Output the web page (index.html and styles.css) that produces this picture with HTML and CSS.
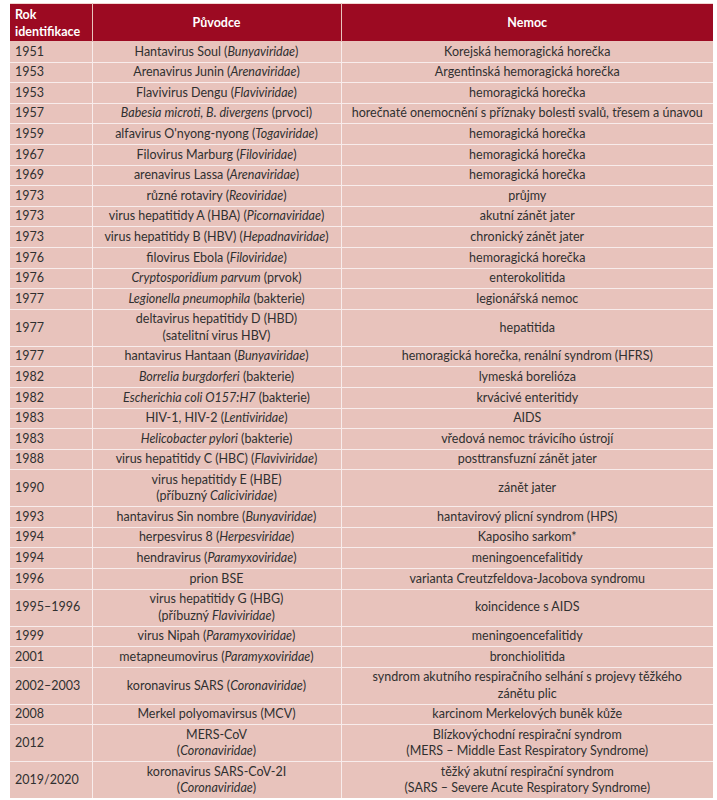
FILE: index.html
```html
<!DOCTYPE html>
<html lang="cs">
<head>
<meta charset="utf-8">
<title>Tabulka</title>
<link rel="stylesheet" href="styles.css">
</head>
<body>
<table class="tbl">
  <colgroup>
    <col class="c1"><col class="c2"><col class="c3">
  </colgroup>
  <thead>
    <tr><th class="year">Rok<br>identifikace</th><th>Původce</th><th>Nemoc</th></tr>
  </thead>
  <tbody>
    <tr><td>1951</td><td>Hantavirus Soul (<i>Bunyaviridae</i>)</td><td>Korejská hemoragická horečka</td></tr>
    <tr><td>1953</td><td>Arenavirus Junin (<i>Arenaviridae</i>)</td><td>Argentinská hemoragická horečka</td></tr>
    <tr><td>1953</td><td>Flavivirus Dengu (<i>Flaviviridae</i>)</td><td>hemoragická horečka</td></tr>
    <tr><td>1957</td><td><i>Babesia microti, B. divergens</i> (prvoci)</td><td>horečnaté onemocnění s příznaky bolesti svalů, třesem a únavou</td></tr>
    <tr><td>1959</td><td>alfavirus O'nyong-nyong (<i>Togaviridae</i>)</td><td>hemoragická horečka</td></tr>
    <tr><td>1967</td><td>Filovirus Marburg (<i>Filoviridae</i>)</td><td>hemoragická horečka</td></tr>
    <tr><td>1969</td><td>arenavirus Lassa (<i>Arenaviridae</i>)</td><td>hemoragická horečka</td></tr>
    <tr><td>1973</td><td>různé rotaviry (<i>Reoviridae</i>)</td><td>průjmy</td></tr>
    <tr><td>1973</td><td>virus hepatitidy A (HBA) (<i>Picornaviridae</i>)</td><td>akutní zánět jater</td></tr>
    <tr><td>1973</td><td>virus hepatitidy B (HBV) (<i>Hepadnaviridae</i>)</td><td>chronický zánět jater</td></tr>
    <tr><td>1976</td><td>filovirus Ebola (<i>Filoviridae</i>)</td><td>hemoragická horečka</td></tr>
    <tr><td>1976</td><td><i>Cryptosporidium parvum</i> (prvok)</td><td>enterokolitida</td></tr>
    <tr><td>1977</td><td><i>Legionella pneumophila</i> (bakterie)</td><td>legionářská nemoc</td></tr>
    <tr><td>1977</td><td>deltavirus hepatitidy D (HBD)<br>(satelitní virus HBV)</td><td>hepatitida</td></tr>
    <tr><td>1977</td><td>hantavirus Hantaan (<i>Bunyaviridae</i>)</td><td>hemoragická horečka, renální syndrom (HFRS)</td></tr>
    <tr><td>1982</td><td><i>Borrelia burgdorferi</i> (bakterie)</td><td>lymeská borelióza</td></tr>
    <tr><td>1982</td><td><i>Escherichia coli O157:H7</i> (bakterie)</td><td>krvácivé enteritidy</td></tr>
    <tr><td>1983</td><td>HIV-1, HIV-2 (<i>Lentiviridae</i>)</td><td>AIDS</td></tr>
    <tr><td>1983</td><td><i>Helicobacter pylori</i> (bakterie)</td><td>vředová nemoc trávicího ústrojí</td></tr>
    <tr><td>1988</td><td>virus hepatitidy C (HBC) (<i>Flaviviridae</i>)</td><td>posttransfuzní zánět jater</td></tr>
    <tr><td>1990</td><td>virus hepatitidy E (HBE)<br>(příbuzný <i>Caliciviridae</i>)</td><td>zánět jater</td></tr>
    <tr><td>1993</td><td>hantavirus Sin nombre (<i>Bunyaviridae</i>)</td><td>hantavirový plicní syndrom (HPS)</td></tr>
    <tr><td>1994</td><td>herpesvirus 8 (<i>Herpesviridae</i>)</td><td>Kaposiho sarkom*</td></tr>
    <tr><td>1994</td><td>hendravirus (<i>Paramyxoviridae</i>)</td><td>meningoencefalitidy</td></tr>
    <tr><td>1996</td><td>prion BSE</td><td>varianta Creutzfeldova-Jacobova syndromu</td></tr>
    <tr><td>1995–1996</td><td>virus hepatitidy G (HBG)<br>(příbuzný <i>Flaviviridae</i>)</td><td>koincidence s AIDS</td></tr>
    <tr><td>1999</td><td>virus Nipah (<i>Paramyxoviridae</i>)</td><td>meningoencefalitidy</td></tr>
    <tr><td>2001</td><td>metapneumovirus (<i>Paramyxoviridae</i>)</td><td>bronchiolitida</td></tr>
    <tr><td>2002–2003</td><td>koronavirus SARS (<i>Coronaviridae</i>)</td><td>syndrom akutního respiračního selhání s projevy těžkého<br>zánětu plic</td></tr>
    <tr><td>2008</td><td>Merkel polyomavirsus (MCV)</td><td>karcinom Merkelových buněk kůže</td></tr>
    <tr><td>2012</td><td>MERS-CoV<br>(<i>Coronaviridae</i>)</td><td>Blízkovýchodní respirační syndrom<br>(MERS – Middle East Respiratory Syndrome)</td></tr>
    <tr><td>2019/2020</td><td>koronavirus SARS-CoV-2I<br>(<i>Coronaviridae</i>)</td><td>těžký akutní respirační syndrom<br>(SARS – Severe Acute Respiratory Syndrome)</td></tr>
  </tbody>
</table>
</body>
</html>
```

FILE: styles.css
```css
html, body {
  margin: 0;
  padding: 0;
  background: #ffffff;
}

body {
  padding: 3px 4px 0 10px;
  font-family: Lato, "Open Sans", "Liberation Sans", sans-serif;
  font-size: 12.5px;
  color: #303030;
}

.tbl {
  width: 703px;
  border-collapse: collapse;
  table-layout: fixed;
  background: #e8c3bc;
}

.c1 { width: 82px; }
.c2 { width: 249px; }
.c3 { width: 372px; }

.tbl th {
  background: #9c0a22;
  color: #ffffff;
  font-weight: 700;
  text-align: center;
  line-height: 17px;
  padding: 1.5px 5px;
  border: 1px solid #e9c4bd;
  border-top: 1px solid #f3d6d2;
  vertical-align: middle;
}

.tbl th.year {
  text-align: left;
}

.tbl td {
  line-height: 16.4px;
  padding: 1.6px 5px;
  border: 1px solid #f8eceb;
  text-align: center;
  vertical-align: middle;
}

.tbl td:first-child {
  text-align: left;
}

.tbl tr > :first-child { border-left: none; }
.tbl tr > :last-child { border-right: none; }
.tbl tbody tr:last-child td { border-bottom: none; }

.tbl i {
  font-style: italic;
}
```
